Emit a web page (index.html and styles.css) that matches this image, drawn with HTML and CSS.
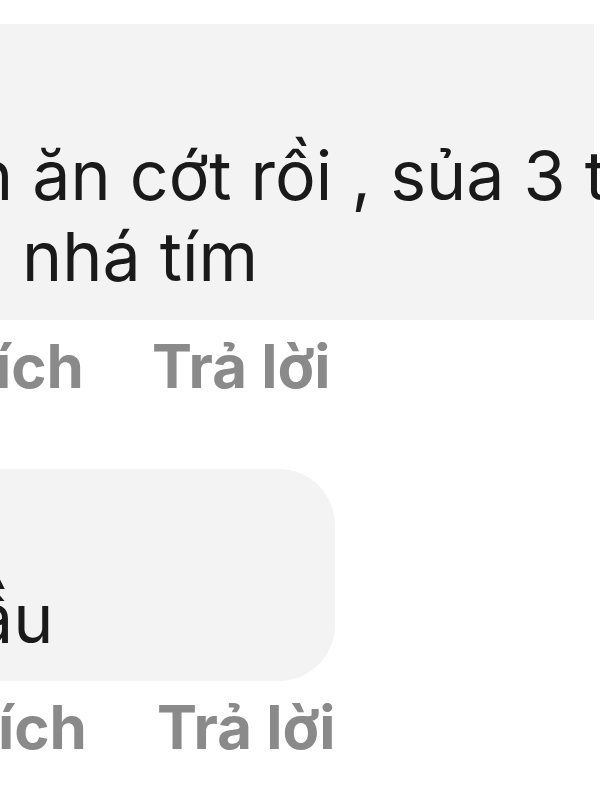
FILE: index.html
```html
<!DOCTYPE html>
<html lang="vi">
<head>
    <meta charset="UTF-8">
    <title>Bình luận</title>
    <link rel="stylesheet" href="styles.css">
</head>
<body>
    <div class="thread">
        <div class="comment">
            <div class="bubble bubble-wide">
                <p class="line line-first">n ăn cớt rồi , sủa 3 t</p>
                <p class="line line-second">nhá tím</p>
            </div>
            <div class="actions">
                <span class="action action-like">ích</span>
                <span class="action">Trả lời</span>
            </div>
        </div>

        <div class="comment comment-short">
            <div class="bubble bubble-narrow">
                <p class="line line-tail">ầu</p>
            </div>
            <div class="actions actions-second">
                <span class="action action-like">ích</span>
                <span class="action">Trả lời</span>
            </div>
        </div>
    </div>
</body>
</html>
```

FILE: styles.css
```css
/* Comment thread, zoomed crop */
:root {
    --bg-page: #ffffff;
    --bg-bubble: #f3f3f3;
    --text-main: #1a1a1a;
    --text-muted: #8a8a8a;
}

* {
    margin: 0;
    padding: 0;
    box-sizing: border-box;
}

html, body {
    width: 600px;
    height: 800px;
    overflow: hidden;
    background-color: var(--bg-page);
}

body {
    font-family: Inter, 'Noto Sans', sans-serif;
    color: var(--text-main);
}

.thread {
    padding-top: 24px;
}

.bubble {
    background-color: var(--bg-bubble);
}

.bubble-wide {
    width: 594px;
    padding: 111px 0 23px;
}

.bubble-narrow {
    width: 335px;
    padding: 109px 0 22px;
    border-radius: 0 56px 56px 0;
}

.line {
    font-size: 68px;
    line-height: 81px;
    white-space: nowrap;
}

.line-first {
    margin-left: -27px;
}

.line-second {
    margin-left: 22px;
}

.line-tail {
    margin-left: -25px;
}

.actions {
    display: flex;
    gap: 68px;
    margin-top: 11px;
    font-size: 60px;
    line-height: 70px;
    font-weight: 700;
    color: var(--text-muted);
    white-space: nowrap;
}

.action-like {
    margin-left: -5px;
}

.comment-short {
    margin-top: 68px;
}

.actions-second {
    gap: 70px;
}

.actions-second .action-like {
    margin-left: -2px;
}
```
